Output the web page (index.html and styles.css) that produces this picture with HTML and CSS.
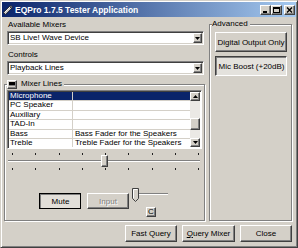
FILE: index.html
```html
<!DOCTYPE html>
<html lang="en">
<head>
  <meta charset="UTF-8">
  <meta name="viewport" content="width=device-width, initial-scale=1.0">
  <title>EQPro 1.7.5 Tester Application</title>
  <link rel="stylesheet" href="styles.css">
</head>
<body>
  <div class="window">
    <div class="titlebar">
      <svg class="app-icon" width="10" height="10" viewBox="0 0 10 10">
        <polygon points="0.5,7.5 6.5,1.5 8.5,3.5 2.5,9.5" fill="#c8c8c8" stroke="#202020" stroke-width="0.8"/>
        <polygon points="6.5,1.5 8,0.5 9.5,2 8.5,3.5" fill="#808080" stroke="#202020" stroke-width="0.6"/>
        <line x1="2" y1="7" x2="7" y2="2" stroke="#fff" stroke-width="0.8"/>
      </svg>
      <span class="title">EQPro 1.7.5 Tester Application</span>
      <div class="caption-buttons">
        <span class="cap-btn"><svg width="7" height="6" viewBox="0 0 7 6"><rect x="1" y="4" width="4" height="2" fill="#000"/></svg></span>
        <span class="cap-btn"><svg width="7" height="6" viewBox="0 0 7 6"><rect x="0.5" y="0.5" width="6" height="5" fill="none" stroke="#000"/><rect x="0" y="0" width="7" height="2" fill="#000"/></svg></span>
        <span class="cap-btn close"><svg width="7" height="6" viewBox="0 0 7 6"><path d="M1 0.5 L6 5.5 M6 0.5 L1 5.5" stroke="#000" stroke-width="1.4"/></svg></span>
      </div>
    </div>

    <div class="body">
      <div class="main">
        <div class="left">
          <div class="label">Available Mixers</div>
          <div class="combo">
            <span class="combo-text">SB Live! Wave Device</span>
            <span class="drop"><svg width="5" height="3" viewBox="0 0 5 3"><polygon points="0,0 5,0 2.5,3" fill="#000"/></svg></span>
          </div>
          <div class="label label-gap">Controls</div>
          <div class="combo">
            <span class="combo-text">Playback Lines</span>
            <span class="drop"><svg width="5" height="3" viewBox="0 0 5 3"><polygon points="0,0 5,0 2.5,3" fill="#000"/></svg></span>
          </div>

          <div class="group mixer-lines">
            <div class="legend">
              <span class="legend-icon"><span class="screen"></span></span>
              <span>Mixer Lines</span>
            </div>

            <div class="listview">
              <div class="rows">
                <div class="row selected"><span class="cell name">Microphone</span><span class="cell"></span></div>
                <div class="row"><span class="cell name">PC Speaker</span><span class="cell"></span></div>
                <div class="row"><span class="cell name">Auxiliary</span><span class="cell"></span></div>
                <div class="row"><span class="cell name">TAD-In</span><span class="cell"></span></div>
                <div class="row"><span class="cell name">Bass</span><span class="cell">Bass Fader for the Speakers</span></div>
                <div class="row"><span class="cell name">Treble</span><span class="cell">Treble Fader for the Speakers</span></div>
              </div>
              <div class="scrollbar">
                <span class="sb-btn"><svg width="5" height="3" viewBox="0 0 5 3"><polygon points="0,3 5,3 2.5,0" fill="#000"/></svg></span>
                <span class="sb-space-top"></span>
                <span class="sb-thumb"></span>
                <span class="sb-space"></span>
                <span class="sb-btn"><svg width="5" height="3" viewBox="0 0 5 3"><polygon points="0,0 5,0 2.5,3" fill="#000"/></svg></span>
              </div>
            </div>

            <div class="slider">
              <div class="ticks">
                <span></span><span></span><span></span><span></span><span></span><span></span><span></span><span></span><span></span>
              </div>
              <div class="track-row">
                <span class="track track-left"></span>
                <span class="thumb"></span>
                <span class="track"></span>
              </div>
              <div class="ticks ticks-bottom">
                <span></span><span></span><span></span><span></span><span></span><span></span><span></span><span></span><span></span>
              </div>
            </div>

            <div class="control-row">
              <button class="btn btn-pressed mute">Mute</button>
              <button class="btn input" disabled>Input</button>
              <div class="mini">
                <div class="mini-slider">
                  <svg class="mini-thumb" width="7" height="14" viewBox="0 0 7 14">
                    <polygon points="0.5,0.5 6.5,0.5 6.5,10.5 3.5,13.5 0.5,10.5" fill="#d4d0c8" stroke="#404040"/>
                    <polyline points="1.5,10 1.5,1.5 5.5,1.5" fill="none" stroke="#fff"/>
                  </svg>
                  <span class="mini-track"></span>
                </div>
                <button class="btn mini-btn">C</button>
              </div>
            </div>
          </div>
        </div>

        <div class="group advanced">
          <div class="legend"><span>Advanced</span></div>
          <button class="btn adv-btn">Digital Output Only</button>
          <button class="btn btn-checked adv-btn mic">Mic Boost (+20dB)</button>
        </div>
      </div>

      <div class="footer">
        <button class="btn foot-btn">Fast Query</button>
        <button class="btn foot-btn wide"><span><u>Q</u>uery Mixer</span></button>
        <button class="btn foot-btn">Close</button>
      </div>
    </div>
  </div>
</body>
</html>
```

FILE: styles.css
```css
* {
  box-sizing: border-box;
}
body {
  margin: 0;
  background: #d4d0c8;
  font-family: "Liberation Sans", Arial, sans-serif;
  font-size: 8px;
  color: #000;
}
.window {
  width: 298px;
  height: 248px;
  border: 1px solid;
  border-color: #d4d0c8 #404040 #404040 #d4d0c8;
  box-shadow: inset 1px 1px #fff, inset -1px -1px #808080;
  padding: 1px;
  display: flex;
  flex-direction: column;
}

/* title bar */
.titlebar {
  height: 15px;
  display: flex;
  align-items: center;
  padding: 0 1px 0 1px;
  background: linear-gradient(to right, #0a246a, #a6caf0);
  color: #fff;
  font-weight: bold;
  font-size: 8.5px;
}
.app-icon {
  margin-right: 2px;
}
.title {
  flex: 1;
  line-height: 10px;
}
.caption-buttons {
  display: flex;
}
.cap-btn {
  width: 11px;
  height: 10px;
  display: flex;
  align-items: center;
  justify-content: center;
  background: #d4d0c8;
  border: 1px solid;
  border-color: #fff #404040 #404040 #fff;
  box-shadow: inset -1px -1px #808080;
}
.cap-btn.close {
  margin-left: 2px;
}

/* body */
.body {
  flex: 1;
  display: flex;
  flex-direction: column;
  padding: 2px 4px 0 2px;
}
.main {
  height: 202px;
  display: flex;
  gap: 4px;
}
.left {
  width: 201px;
  display: flex;
  flex-direction: column;
  padding-top: 1px;
}
.label {
  height: 10px;
  line-height: 10px;
  padding-left: 4px;
}
.label-gap {
  margin-top: 5px;
}
.combo {
  height: 14px;
  margin: 1px 1px 0 3px;
  display: flex;
  background: #fff;
  border: 1px solid;
  border-color: #808080 #fff #fff #808080;
  box-shadow: inset 1px 1px #404040, inset -1px -1px #d4d0c8;
}
.combo-text {
  flex: 1;
  line-height: 12px;
  padding-left: 2px;
}
.drop {
  width: 9px;
  height: 10px;
  margin: 1px 1px 1px 0;
  display: flex;
  align-items: center;
  justify-content: center;
  background: #d4d0c8;
  border: 1px solid;
  border-color: #fff #404040 #404040 #fff;
  box-shadow: inset -1px -1px #808080;
}

/* group boxes */
.group {
  display: flex;
  flex-direction: column;
  border: 1px solid #808080;
  box-shadow: inset 1px 1px #fff, 1px 1px #fff;
}
.mixer-lines {
  flex: 1;
  margin-top: 9px;
}
.legend {
  align-self: flex-start;
  height: 10px;
  line-height: 10px;
  display: flex;
  align-items: center;
  gap: 4px;
  margin: -6px 0 1px 2px;
  padding: 0 2px 0 0;
  background: #d4d0c8;
}
.legend-icon {
  width: 10px;
  height: 9px;
  display: flex;
  justify-content: center;
  padding-top: 1px;
  border: 1px solid;
  border-color: #fff #404040 #404040 #fff;
  box-shadow: inset -1px -1px #808080;
}
.screen {
  width: 6px;
  height: 4px;
  background: #000;
  border-bottom: 1px solid #808080;
}

/* list view */
.listview {
  height: 59px;
  margin: 0 2px;
  padding: 1px;
  display: flex;
  background: #fff;
  border: 1px solid;
  border-color: #808080 #fff #fff #808080;
  box-shadow: inset 1px 1px #404040;
  overflow: hidden;
}
.rows {
  flex: 1;
  overflow: hidden;
}
.row {
  height: 9.4px;
  display: grid;
  grid-template-columns: 64px 1fr;
  border-bottom: 1px solid #d4d0c8;
  line-height: 8.4px;
}
.cell {
  padding-left: 2px;
  white-space: nowrap;
  overflow: hidden;
}
.cell.name {
  padding-left: 1px;
  border-right: 1px solid #d4d0c8;
}
.row.selected {
  background: #0a246a;
  color: #fff;
}
.scrollbar {
  width: 10px;
  display: flex;
  flex-direction: column;
  background: #ebe9e5;
}
.sb-btn,
.sb-thumb {
  display: flex;
  align-items: center;
  justify-content: center;
  background: #d4d0c8;
  border: 1px solid;
  border-color: #fff #404040 #404040 #fff;
  box-shadow: inset -1px -1px #808080;
}
.sb-btn {
  height: 9px;
}
.sb-space-top {
  height: 17px;
}
.sb-thumb {
  height: 12px;
}
.sb-space {
  flex: 1;
}

/* big slider */
.slider {
  margin: 4px 2px 0;
  display: flex;
  flex-direction: column;
}
.ticks {
  height: 2px;
  display: flex;
  justify-content: space-between;
  padding: 0 3px 0 5px;
}
.ticks span {
  width: 1px;
  height: 2px;
  background: #202020;
}
.ticks-bottom {
  margin-top: 1px;
}
.track-row {
  height: 12px;
  display: flex;
  align-items: center;
  padding: 0 2px 0 1px;
}
.track {
  flex: 1;
  height: 2px;
  border-top: 1px solid #808080;
  border-bottom: 1px solid #fff;
}
.track-left {
  flex: none;
  width: 93px;
}
.thumb {
  width: 7px;
  height: 12px;
  background: #d4d0c8;
  border: 1px solid;
  border-color: #fff #404040 #404040 #fff;
  box-shadow: inset -1px -1px #808080;
}

/* buttons */
.btn {
  padding: 0;
  font: inherit;
  color: #000;
  display: flex;
  align-items: center;
  justify-content: center;
  background: #d4d0c8;
  border: 1px solid;
  border-color: #fff #404040 #404040 #fff;
  box-shadow: inset -1px -1px #808080;
}
.btn-pressed {
  border-color: #000;
  box-shadow: inset 1px 1px #808080;
  background: #e2dfd9;
  padding: 1px 0 0 1px;
}
.btn-checked {
  border-color: #404040 #fff #fff #404040;
  box-shadow: inset 1px 1px #808080;
  background: #e4e2dd;
  padding: 1px 0 0 1px;
}
.btn:disabled {
  color: #808080;
  text-shadow: 1px 1px #fff;
}

.control-row {
  display: flex;
  align-items: flex-start;
  margin-top: 18px;
  padding-left: 34px;
}
.mute,
.input {
  width: 42px;
  height: 16px;
  margin-top: 5px;
}
.input {
  margin-left: 6px;
}
.mini {
  margin-left: 3px;
  width: 36px;
  display: flex;
  flex-direction: column;
}
.mini-slider {
  display: flex;
  align-items: flex-start;
}
.mini-track {
  flex: 1;
  height: 2px;
  margin-top: 5px;
  border-top: 1px solid #808080;
  border-bottom: 1px solid #fff;
}
.mini-btn {
  width: 10px;
  height: 10px;
  margin: 5px 0 0 14px;
  line-height: 8px;
}

/* advanced */
.advanced {
  width: 83px;
  margin-top: 5px;
}
.adv-btn {
  height: 20px;
  margin: 2px 4px 0 5px;
}
.adv-btn.mic {
  margin-top: 4px;
}

/* footer */
.footer {
  display: flex;
  justify-content: flex-end;
  gap: 5px;
  padding-top: 4px;
}
.foot-btn {
  width: 52px;
  height: 17px;
}
.foot-btn.wide {
  width: 53px;
}
```
